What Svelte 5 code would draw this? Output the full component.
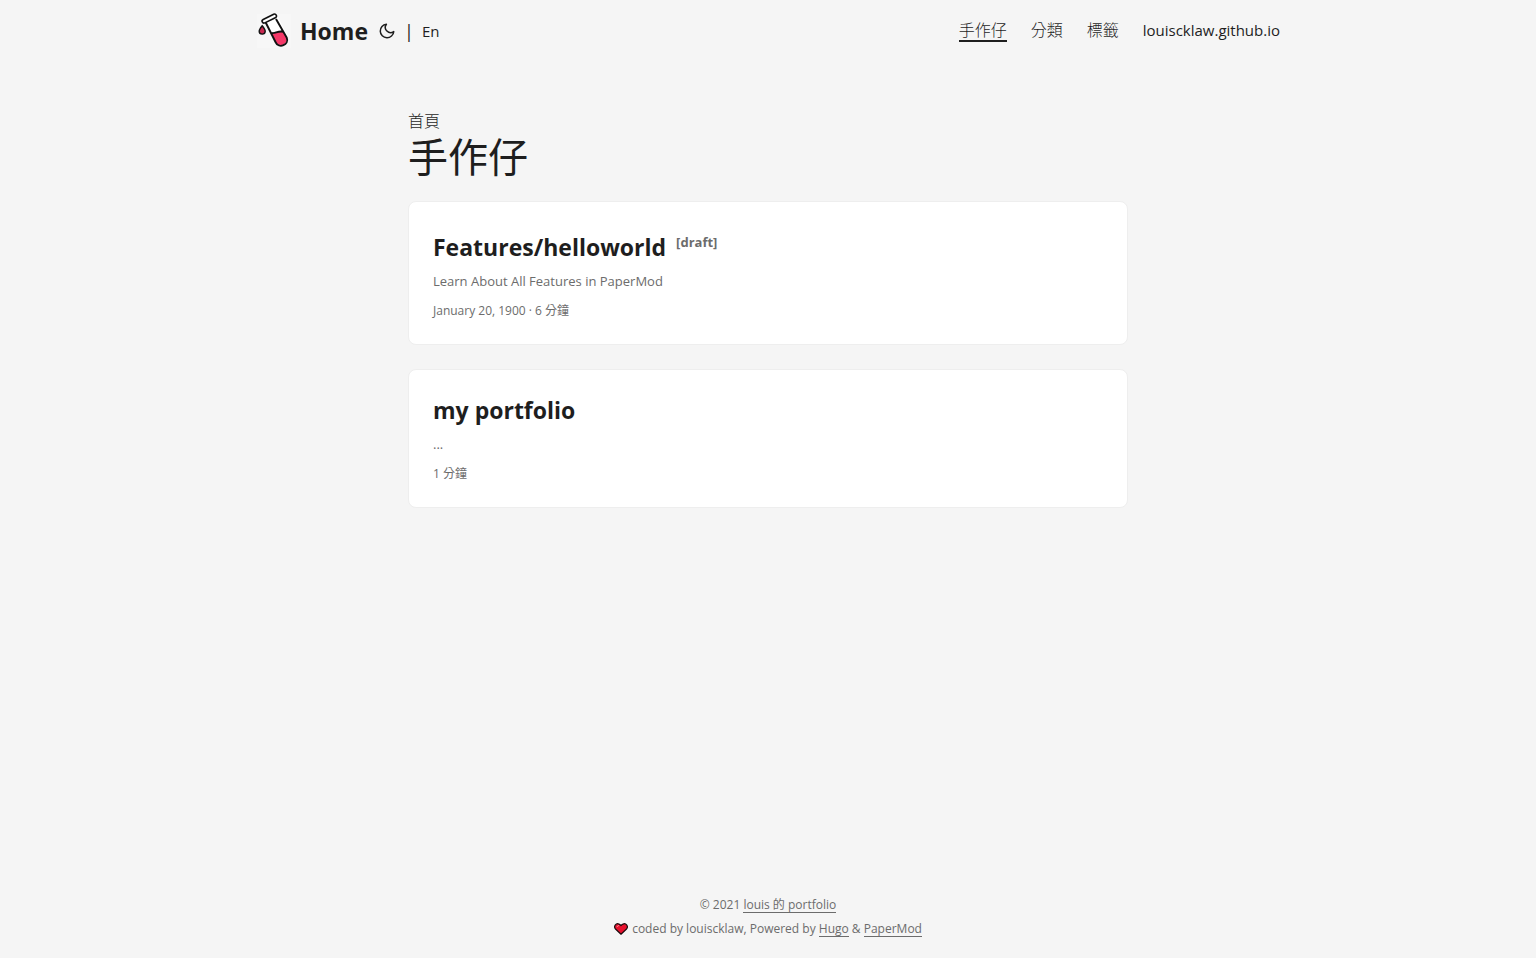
<script>
  const menu = [
    { label: '手作仔', href: '#posts', active: true },
    { label: '分類', href: '#categories' },
    { label: '標籤', href: '#tags' },
    { label: 'louiscklaw.github.io', href: '#site', latin: true },
  ];
  const posts = [
    { title: 'Features/helloworld', draft: true, summary: 'Learn About All Features in PaperMod', date: 'January 20, 1900 · ', minutes: 6 },
    { title: 'my portfolio', draft: false, summary: '...', date: '', minutes: 1 },
  ];
</script>

<div class="page">
  <header>
    <nav>
      <div class="brand">
        <a class="home" href="#home">
          <svg class="flask" viewBox="0 0 36 36" aria-hidden="true">
            <rect x="1" y="1" width="34" height="34" fill="#f7f7f7" />
            <path d="M9.5 9.5 18 26.5C22 35 34 31 31.5 22.5L22 4Z" fill="#fff" />
            <path d="M15.700 20C19 21 22 17.500 27.200 18.800L30.700 25C32.500 31 22.500 35.500 19.500 28.500Z" fill="#f43868" />
            <path d="M9.700 9.500 19.500 29C22.800 36.500 33.500 31.500 30.800 24.800L20 6M15.700 20C19 21 22 17.500 27.200 18.800" fill="none" stroke="#111" stroke-width="1.900" stroke-linejoin="round" />
            <rect x="5.500" y="3.700" width="15.500" height="3.800" rx="1.900" transform="rotate(-26 13.200 5.600)" fill="#fff" stroke="#111" stroke-width="1.600" />
            <path d="M6.200 12.800C4 15.500 3.200 17 3.200 18.300C3.200 22.100 9.200 22.100 9.200 18.300C9.200 17 8.300 15.400 6.200 12.800Z" fill="#c92850" stroke="#151515" stroke-width="1.400" />
          </svg>
          <span>Home</span>
        </a>
        <button class="theme" aria-label="Toggle theme">
          <svg viewBox="0 0 24 24" aria-hidden="true"><path d="M21 12.790A9 9 0 1 1 11.210 3 7 7 0 0 0 21 12.790z" fill="none" stroke="currentColor" stroke-width="2" stroke-linecap="round" stroke-linejoin="round" /></svg>
        </button>
        <span class="divider">|</span>
        <a class="lang" href="#en">En</a>
      </div>
      <ul class="menu">
        {#each menu as item}
          <li><a href={item.href} class:active={item.active} class:latin={item.latin}>{item.label}</a></li>
        {/each}
      </ul>
    </nav>
  </header>

  <main>
    <div class="crumbs"><a href="#home">首頁</a></div>
    <h1>手作仔</h1>
    {#each posts as post}
      <article class:draft={post.draft}>
        <h2>{post.title}{#if post.draft}<sup>[draft]</sup>{/if}</h2>
        <p>{post.summary}</p>
        <div class="meta">{post.date}{post.minutes} 分鐘</div>
      </article>
    {/each}
  </main>

  <footer>
    <div>© 2021 <a href="#home">louis 的 portfolio</a></div>
    <div>
      <svg class="heart" viewBox="0 0 14 12" role="img" aria-label="Love"><path d="M7 11.200 1.500 6C-.8 3.200 2 .3 4.400.8 5.700 1 6.500 1.800 7 2.600 7.500 1.800 8.300 1 9.600.8 12 .3 14.800 3.200 12.500 6Z" fill="#e8112d" stroke="#1b0a0c" stroke-width="1.200" stroke-linejoin="round" /><path d="M3 3.800Q3.300 2.500 4.600 2.500" fill="none" stroke="#ff8492" stroke-linecap="round" /></svg>
      coded by louiscklaw, Powered by <a href="#hugo">Hugo</a> &amp; <a href="#papermod">PaperMod</a>
    </div>
  </footer>
</div>

<style>
  :global(body) {
    margin: 0;
    background: #f5f5f5;
  }
  .page {
    min-height: 100vh;
    display: flex;
    flex-direction: column;
    color: #1e1e1e;
    font-family: "Open Sans", "Noto Sans CJK TC", sans-serif;
    font-size: 16px;
  }
  a {
    color: inherit;
    text-decoration: none;
  }
  nav {
    display: flex;
    justify-content: space-between;
    max-width: 1024px;
    margin: 0 auto;
    padding: 0 24px;
    line-height: 60px;
  }
  .brand,
  .home {
    display: flex;
    align-items: center;
  }
  .brand {
    padding-top: 2px;
    line-height: 58px;
  }
  .home {
    gap: 8px;
    font-size: 23px;
    font-weight: 700;
  }
  .flask {
    width: 36px;
    height: 36px;
  }
  .theme {
    display: flex;
    margin: 0 8px 0 10px;
    padding: 0;
    border: 0;
    background: none;
    color: inherit;
  }
  .theme svg {
    width: 18px;
    height: 18px;
  }
  .divider {
    font-size: 18px;
  }
  .lang {
    margin-left: 8px;
    font-size: 15px;
    font-weight: 500;
  }
  .menu {
    display: flex;
    gap: 24px;
    margin: 0;
    padding: 0;
    list-style: none;
  }
  .menu a {
    display: inline-block;
    line-height: 20px;
    font-weight: 300;
  }
  .menu .latin {
    font-size: 15px;
    font-weight: 400;
  }
  .active {
    border-bottom: 2px solid #1e1e1e;
  }
  main {
    flex: 1;
    box-sizing: border-box;
    width: 100%;
    max-width: 768px;
    margin: 0 auto;
    padding: 49px 24px;
  }
  .crumbs {
    line-height: 24px;
    font-weight: 300;
  }
  h1 {
    margin: 0 0 20px;
    font-size: 40px;
    font-weight: 400;
    line-height: 48px;
  }
  article {
    margin-bottom: 24px;
    padding: 24px;
    border: 1px solid #eee;
    border-radius: 8px;
    background: #fff;
  }
  h2 {
    margin: 0;
    font-size: 23px;
    font-weight: 700;
    line-height: 32px;
  }
  .draft h2 {
    padding-top: 5px;
  }
  sup {
    margin-left: 10px;
    color: #6c6c6c;
    font-size: 13px;
    line-height: 0;
    vertical-align: 9px;
  }
  p {
    margin: 8px 0 11px;
    color: #6c6c6c;
    font-size: 13px;
    line-height: 20px;
  }
  .meta {
    color: #6c6c6c;
    font-size: 12px;
    line-height: 18px;
  }
  footer {
    padding: 0 24px 17px;
    color: #6c6c6c;
    font-size: 12px;
    line-height: 24px;
    text-align: center;
  }
  footer a {
    display: inline-block;
    border-bottom: 1px solid #6c6c6c;
    line-height: 14px;
  }
  .heart {
    width: 14px;
    height: 12px;
    margin-right: 1px;
    vertical-align: -2px;
  }
</style>
